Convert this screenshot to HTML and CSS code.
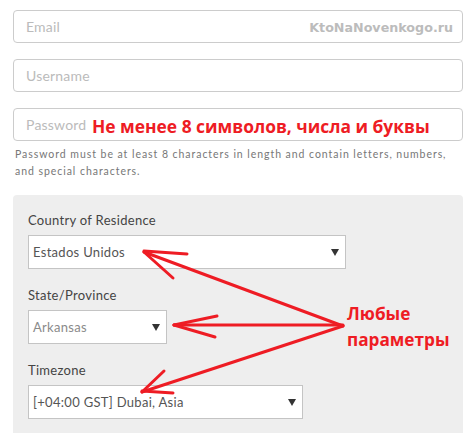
FILE: index.html
```html
<!DOCTYPE html>
<html>
<head>
<meta charset="utf-8">
<link rel="stylesheet" href="styles.css">
</head>
<body>
<div class="page">
  <form class="form">
    <div class="field">
      <input class="input" type="text" placeholder="Email">
      <span class="watermark">KtoNaNovenkogo.ru</span>
    </div>
    <div class="field">
      <input class="input" type="text" placeholder="Username">
    </div>
    <div class="field field-last">
      <input class="input" type="password" placeholder="Password">
      <span class="note note-pass">Не менее 8 символов, числа и буквы</span>
    </div>
    <p class="help">Password must be at least 8 characters in length and contain letters, numbers, and special characters.</p>

    <div class="panel">
      <label class="label">Country of Residence</label>
      <div class="select select-country"><span>Estados Unidos</span><svg class="caret" width="8" height="7" viewBox="0 0 8 7"><polygon points="0,0 8,0 4,7" fill="#333"/></svg></div>
      <label class="label">State/Province</label>
      <div class="select select-state"><span class="muted">Arkansas</span><svg class="caret" width="8" height="7" viewBox="0 0 8 7"><polygon points="0,0 8,0 4,7" fill="#333"/></svg></div>
      <label class="label">Timezone</label>
      <div class="select select-tz"><span>[+04:00 GST] Dubai, Asia</span><svg class="caret" width="8" height="7" viewBox="0 0 8 7"><polygon points="0,0 8,0 4,7" fill="#333"/></svg></div>
    </div>
  </form>

  <div class="note note-any">Любые<br>параметры</div>
  <svg class="arrows" width="473" height="433" viewBox="0 0 473 433">
    <g stroke="#ee1c24" stroke-width="3" stroke-linecap="round" fill="none">
      <line x1="343" y1="326" x2="144" y2="252"/>
      <line x1="144" y1="251" x2="187" y2="254"/>
      <line x1="144" y1="252" x2="173" y2="278"/>
      <line x1="343" y1="325" x2="174" y2="325"/>
      <line x1="174" y1="325" x2="217" y2="316"/>
      <line x1="174" y1="325" x2="215" y2="337"/>
      <line x1="343" y1="326" x2="142" y2="392"/>
      <line x1="142" y1="392" x2="164" y2="371"/>
      <line x1="142" y1="391" x2="173" y2="393"/>
    </g>
  </svg>
</div>
</body>
</html>
```

FILE: styles.css
```css
html, body {
  margin: 0;
  padding: 0;
  background: #ffffff;
}
.page {
  position: relative;
  width: 473px;
  height: 433px;
  overflow: hidden;
  font-family: "Lato", "Open Sans", sans-serif;
}
.form {
  margin: 0;
  padding: 10px 10px 0 13px;
  width: 450px;
}
.field {
  position: relative;
  margin-bottom: 16px;
}
.field-last {
  margin-bottom: 0;
}
.input {
  display: block;
  box-sizing: border-box;
  width: 450px;
  height: 33px;
  margin: 0;
  padding: 0 12px;
  border: 1px solid #cccccc;
  border-radius: 4px;
  background: #ffffff;
  font-family: "Lato", sans-serif;
  font-size: 14px;
  letter-spacing: 0.2px;
  color: #333;
  outline: none;
}
.input::placeholder {
  color: #bbbbbb;
}
.watermark {
  position: absolute;
  right: 10px;
  top: 0;
  line-height: 35px;
  font-family: "DejaVu Sans", sans-serif;
  font-weight: bold;
  font-size: 12.7px;
  color: #bcbcbc;
}
.note {
  position: absolute;
  font-family: "Open Sans", sans-serif;
  font-weight: bold;
  color: #ee1c24;
}
.note-pass {
  left: 79px;
  top: 0;
  font-size: 17.4px;
  line-height: 36px;
  white-space: nowrap;
}
.note-any {
  left: 347px;
  top: 301px;
  font-size: 17.2px;
  line-height: 26px;
}
.help {
  margin: 5px 0 0 2px;
  width: 440px;
  font-size: 10.5px;
  line-height: 17px;
  letter-spacing: 0.95px;
  color: #777777;
}
.panel {
  margin-top: 15px;
  background: #eeeeee;
  border-radius: 4px;
  padding: 17px 15px 20px 15px;
  display: flex;
  flex-direction: column;
  align-items: flex-start;
}
.label {
  display: block;
  font-size: 13px;
  line-height: 16px;
  letter-spacing: 0.3px;
  color: #444444;
  margin-bottom: 7px;
}
.select {
  box-sizing: border-box;
  height: 34px;
  background: #ffffff;
  border: 1px solid #c4c4c4;
  display: flex;
  align-items: center;
  justify-content: space-between;
  padding: 0 6px 0 4px;
  font-size: 13px;
  letter-spacing: 0.3px;
  color: #555555;
  margin-bottom: 18px;
}
.select .muted {
  color: #8a8a8a;
}
.select-country { width: 318px; }
.select-state { width: 139px; }
.select-tz { width: 275px; }
.caret {
  display: block;
  flex: none;
}
.arrows {
  position: absolute;
  left: 0;
  top: 0;
  pointer-events: none;
}
```
